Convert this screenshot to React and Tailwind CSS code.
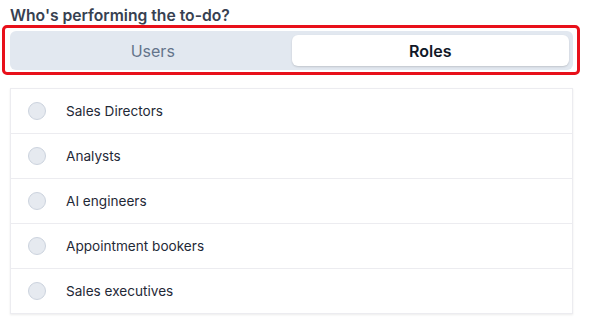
import React, { useState } from 'react';

const roles = ['Sales Directors', 'Analysts', 'AI engineers', 'Appointment bookers', 'Sales executives'];

const App = () => {
  const [tab, setTab] = useState('Roles');
  const [selected, setSelected] = useState(null);

  return (
    <div className="relative w-[593px] h-[326px] bg-white font-['Inter',sans-serif]">
      <div className="pl-[10px] pr-[20px] pt-[5px]">
        <h2 className="text-[15.7px] font-semibold leading-[21px] text-[#374151]">Who's performing the to-do?</h2>

        {/* Segmented control */}
        <div className="mt-[5px] flex h-[39px] rounded-[6px] bg-[#e2e8f0] p-[4px]">
          {['Users', 'Roles'].map((t) => (
            <button
              key={t}
              onClick={() => setTab(t)}
              className={
                tab === t
                  ? 'flex-1 rounded-[6px] bg-white text-[16px] font-semibold text-[#111827] shadow-[0_1px_2px_rgba(0,0,0,0.15)]'
                  : 'flex-1 rounded-[6px] text-[16px] text-[#64748b]'
              }
            >
              {t}
            </button>
          ))}
        </div>

        {/* Role list */}
        <div className="mt-[18px] border border-[#ececf0] bg-white shadow-[0_1px_2px_rgba(0,0,0,0.08)]">
          {roles.map((r, i) => (
            <div
              key={r}
              onClick={() => setSelected(r)}
              className={`flex items-center pl-[17px] ${i > 0 ? 'h-[45px] border-t border-[#ececf0]' : 'h-[44px]'}`}
            >
              <span
                className={`h-[18px] w-[18px] rounded-full border ${
                  selected === r ? 'border-[#2563eb] bg-[#2563eb]' : 'border-[#ccd3de] bg-[#e6eaf0]'
                }`}
              />
              <span className="ml-[20px] text-[13.6px] text-[#1f2937]">{r}</span>
            </div>
          ))}
        </div>
      </div>

      {/* Highlight annotation */}
      <div className="pointer-events-none absolute left-[2px] top-[25px] h-[50px] w-[578px] rounded-[5px] border-[3px] border-[#e8101a]" />
    </div>
  );
};

export default App;
